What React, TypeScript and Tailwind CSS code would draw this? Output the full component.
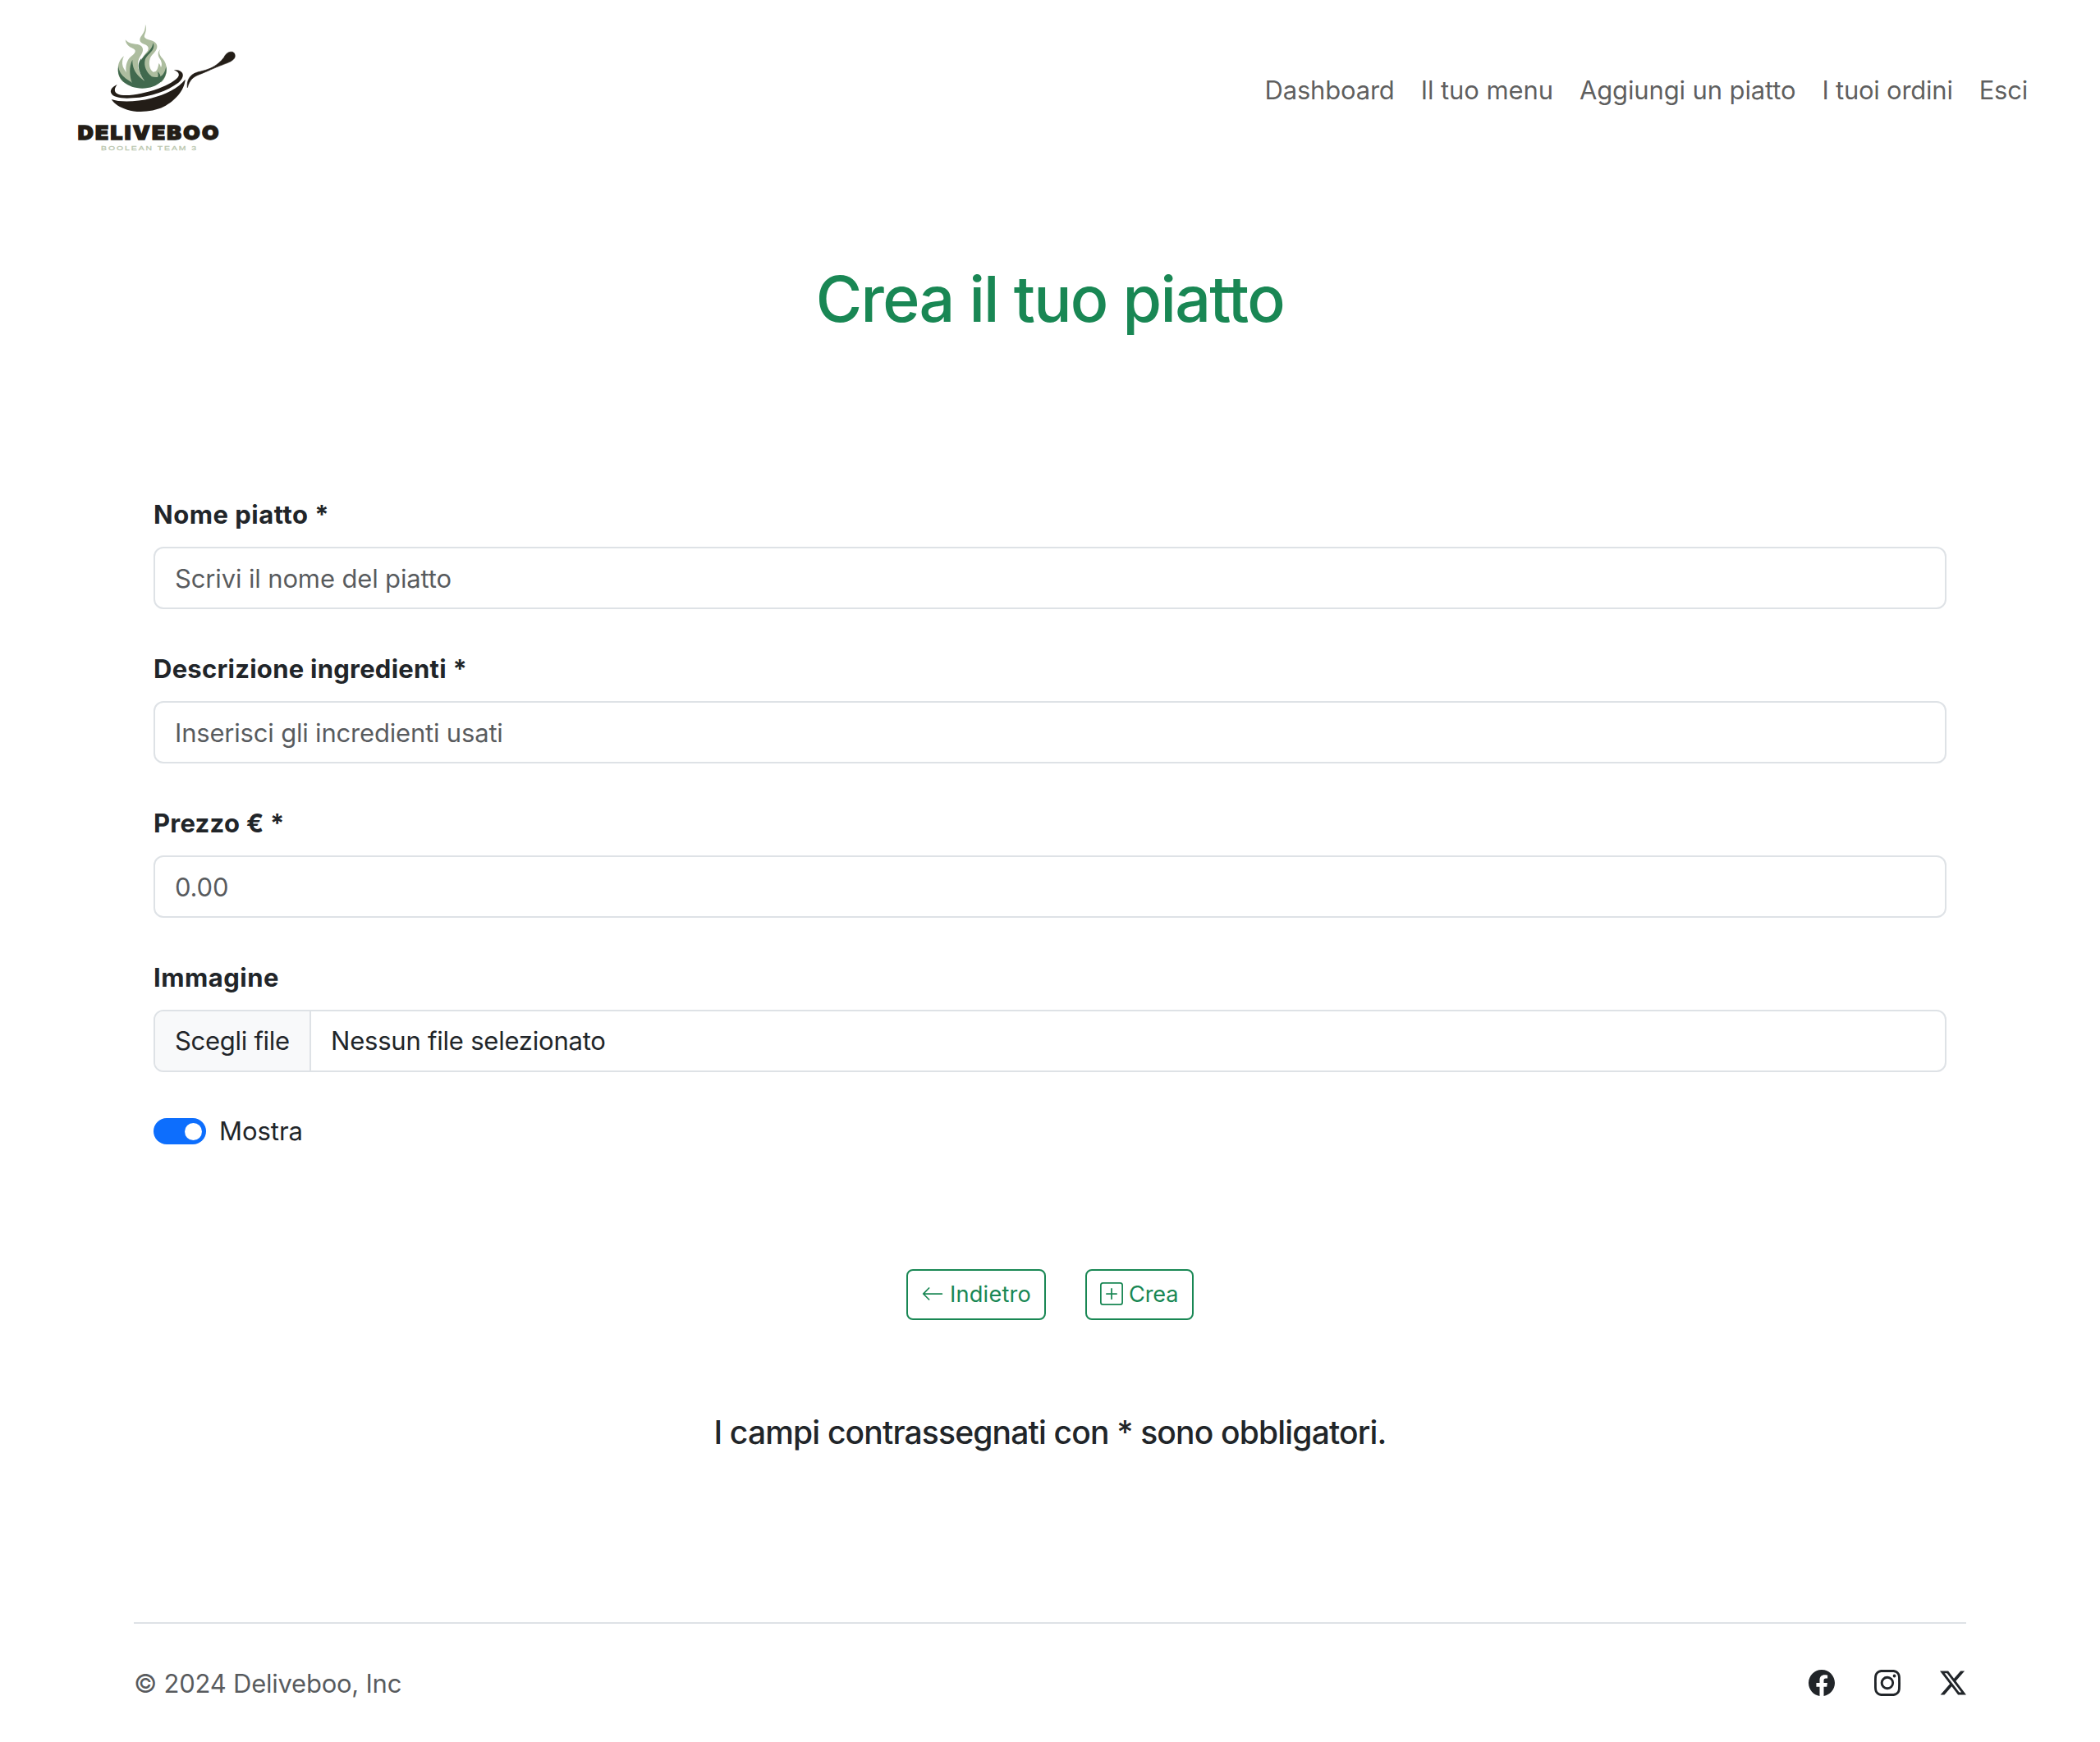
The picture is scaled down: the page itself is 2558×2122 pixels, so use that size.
import { BsArrowLeft, BsFacebook, BsInstagram, BsPlusSquare, BsTwitterX } from "react-icons/bs";

function Logo() {
  return (
    <svg className="h-[175px] w-[220px]" viewBox="0 0 660 525" role="img" aria-label="Deliveboo">
      {/* flames */}
      <g transform="translate(150 15)">
        <g fill="#adbd9f">
          <path d="M63 130C48 142 41 158 41 178C41 200 48 215 60 224L94 226C82 200 66 186 59 168C55 155 57 142 63 130Z" />
          <path d="M68 70C82 90 112 82 126 93C138 104 130 120 123 130C114 143 112 158 116 176C121 196 130 206 137 221L100 232L76 214C70 190 66 168 77 146C84 132 100 126 104 114C106 104 94 102 84 96C75 90 69 82 68 70Z" />
          <path d="M141 14C147 30 142 44 138 54C135 64 146 68 160 72C174 76 186 84 184 98C181 116 161 124 157 143C153 162 158 180 170 188L190 184L196 214L150 228C132 206 124 180 125 158C126 134 140 124 150 110C156 100 150 92 140 88C130 84 121 80 121 70C122 54 142 48 141 14Z" />
          <path d="M196 105C188 116 194 128 204 139C214 150 219 164 219 180C219 196 213 212 200 226L166 222L163 188C178 196 188 178 190 156C194 160 197 165 198 172C204 160 200 148 193 138C186 126 186 114 196 105Z" />
        </g>
        <g fill="#41694e">
          <path d="M43 166C44 186 54 200 70 212C80 219 86 222 92 227C84 202 80 170 94 143C93 170 104 190 117 203C124 210 132 216 138 221C126 204 117 186 116 166C116 155 120 146 127 137C124 162 130 180 144 193C158 206 172 208 186 207C190 202 187 194 186 186C192 193 197 198 196 205C208 198 214 184 217 168C226 212 186 248 130 248C78 248 32 216 43 166Z" />
          <path d="M169 82C182 108 148 122 140 144C135 166 144 188 164 204L150 212C132 196 122 176 124 154C126 128 166 116 169 82Z" />
        </g>
      </g>
      {/* pan */}
      <g fill="#231d17">
        <path d="M188 249C168 258 162 270 166 280C172 297 208 301 246 298C312 294 372 272 412 242C428 229 433 213 424 204C417 197 407 195 395 195C407 200 416 207 413 217C408 232 372 252 338 264C292 280 236 292 202 287C178 283 173 269 188 249Z" />
        <path d="M167 303C200 315 262 312 312 299C366 285 412 262 437 230C434 270 400 308 358 330C320 349 262 353 225 341C198 333 178 320 167 303Z" />
        <path
          d="M445 260C443 240 448 224 464 212C480 201 504 201 528 190C552 179 568 164 579 149C587 132 600 128 610 130C620 134 622 149 613 157C602 168 584 172 562 181C530 194 510 204 486 213C464 222 452 234 445 260Z"
          stroke="#231d17"
          strokeWidth="2"
        />
      </g>
      <text
        transform="translate(44 450) scale(1.13 1)"
        fill="#231d17"
        stroke="#231d17"
        strokeWidth="4"
        fontFamily="Inter, sans-serif"
        fontWeight="900"
        fontSize="70"
        textLength="456"
        lengthAdjust="spacing"
      >
        DELIVEBOO
      </text>
      <text
        transform="translate(129 489) scale(1.3 1)"
        fill="#b9c6ad"
        stroke="#b9c6ad"
        strokeWidth="0.8"
        fontFamily="Liberation Sans, sans-serif"
        fontSize="24"
        textLength="268"
        lengthAdjust="spacing"
      >
        BOOLEAN TEAM 3
      </text>
    </svg>
  );
}

const inputClass =
  "block h-[76px] w-full rounded-[12px] border-2 border-[#dee2e6] bg-white px-6 text-[31px] text-[#212529] placeholder:text-[#212529]/75 placeholder:opacity-100";
const labelClass = "mb-[15px] block pt-px text-[31px] leading-[48px] font-bold";
const buttonClass =
  "flex h-[62px] items-center gap-[7px] rounded-[8px] border-2 border-[#198754] pl-4 text-[27.2px] text-[#198754]";

export default function App() {
  return (
    <div className="flex min-h-[2122px] flex-col bg-white font-['Inter',sans-serif] text-[31px] leading-[48px] text-[#212529]">
      <header className="flex h-[220px] items-start justify-between pt-5 pr-[88px] pl-20">
        <Logo />
        <nav className="mt-[66px] flex gap-8 text-[#000000]/65">
          <a className="tracking-[-0.2px]">Dashboard</a>
          <a className="tracking-[-0.08px]">Il tuo menu</a>
          <a className="tracking-[-0.135px]">Aggiungi un piatto</a>
          <a className="tracking-[-0.24px]">I tuoi ordini</a>
          <a className="tracking-[-0.235px]">Esci</a>
        </nav>
      </header>

      <main className="flex flex-col">
        <h1 className="mt-24 text-center text-[77px] leading-[96px] font-medium tracking-[-1.68px] text-[#198754]">
          Crea il tuo piatto
        </h1>

        <form className="mt-[190px] px-[187px]">
          <div className="mb-12">
            <label className={`${labelClass} tracking-[0.5px]`}>Nome piatto *</label>
            <input className={`${inputClass} tracking-[-0.14px]`} placeholder="Scrivi il nome del piatto" />
          </div>
          <div className="mb-12">
            <label className={`${labelClass} tracking-[0.25px]`}>Descrizione ingredienti *</label>
            <input className={`${inputClass} tracking-[-0.19px]`} placeholder="Inserisci gli incredienti usati" />
          </div>
          <div className="mb-12">
            <label className={`${labelClass} tracking-[0.266px]`}>Prezzo € *</label>
            <input className={`${inputClass} tracking-[-0.157px]`} placeholder="0.00" />
          </div>
          <div className="mb-12">
            <label className={`${labelClass} tracking-[0.49px]`}>Immagine</label>
            <div className="flex h-[76px] items-stretch overflow-hidden rounded-[12px] border-2 border-[#dee2e6]">
              <span className="flex w-[190px] items-center border-r-2 border-[#dee2e6] bg-[#f8f9fa] pl-6 tracking-[-0.291px]">
                Scegli file
              </span>
              <span className="flex items-center pl-6 tracking-[-0.22px]">Nessun file selezionato</span>
            </div>
          </div>
          <div className="flex h-12 items-center gap-4">
            <span className="flex h-8 w-16 items-center justify-end rounded-full bg-[#0d6efd] pr-[5.5px]">
              <span className="size-[21px] rounded-full bg-white" />
            </span>
            <span className="tracking-[-0.05px]">Mostra</span>
          </div>

          <div className="mt-36 flex justify-center gap-12">
            <button type="button" className={`${buttonClass} w-[170px] tracking-[0.2px]`}>
              <BsArrowLeft className="mb-0.5 size-7" />
              Indietro
            </button>
            <button type="button" className={`${buttonClass} w-[132px] tracking-[-0.15px]`}>
              <BsPlusSquare className="mb-0.5 size-7" />
              Crea
            </button>
          </div>
        </form>

        <p className="mt-[113px] text-center text-[39px] leading-[48px] font-medium tracking-[-0.828px]">
          I campi contrassegnati con * sono obbligatori.
        </p>
      </main>

      <footer className="mx-[163px] mt-[207px] flex items-start justify-between border-t-2 border-[#dee2e6] pt-12">
        <p className="pt-px tracking-[-0.24px] text-[#212529]/75">© 2024 Deliveboo, Inc</p>
        <div className="flex h-12 items-center gap-12">
          <BsFacebook className="size-8" />
          <BsInstagram className="size-8" />
          <BsTwitterX className="size-8" />
        </div>
      </footer>
    </div>
  );
}
